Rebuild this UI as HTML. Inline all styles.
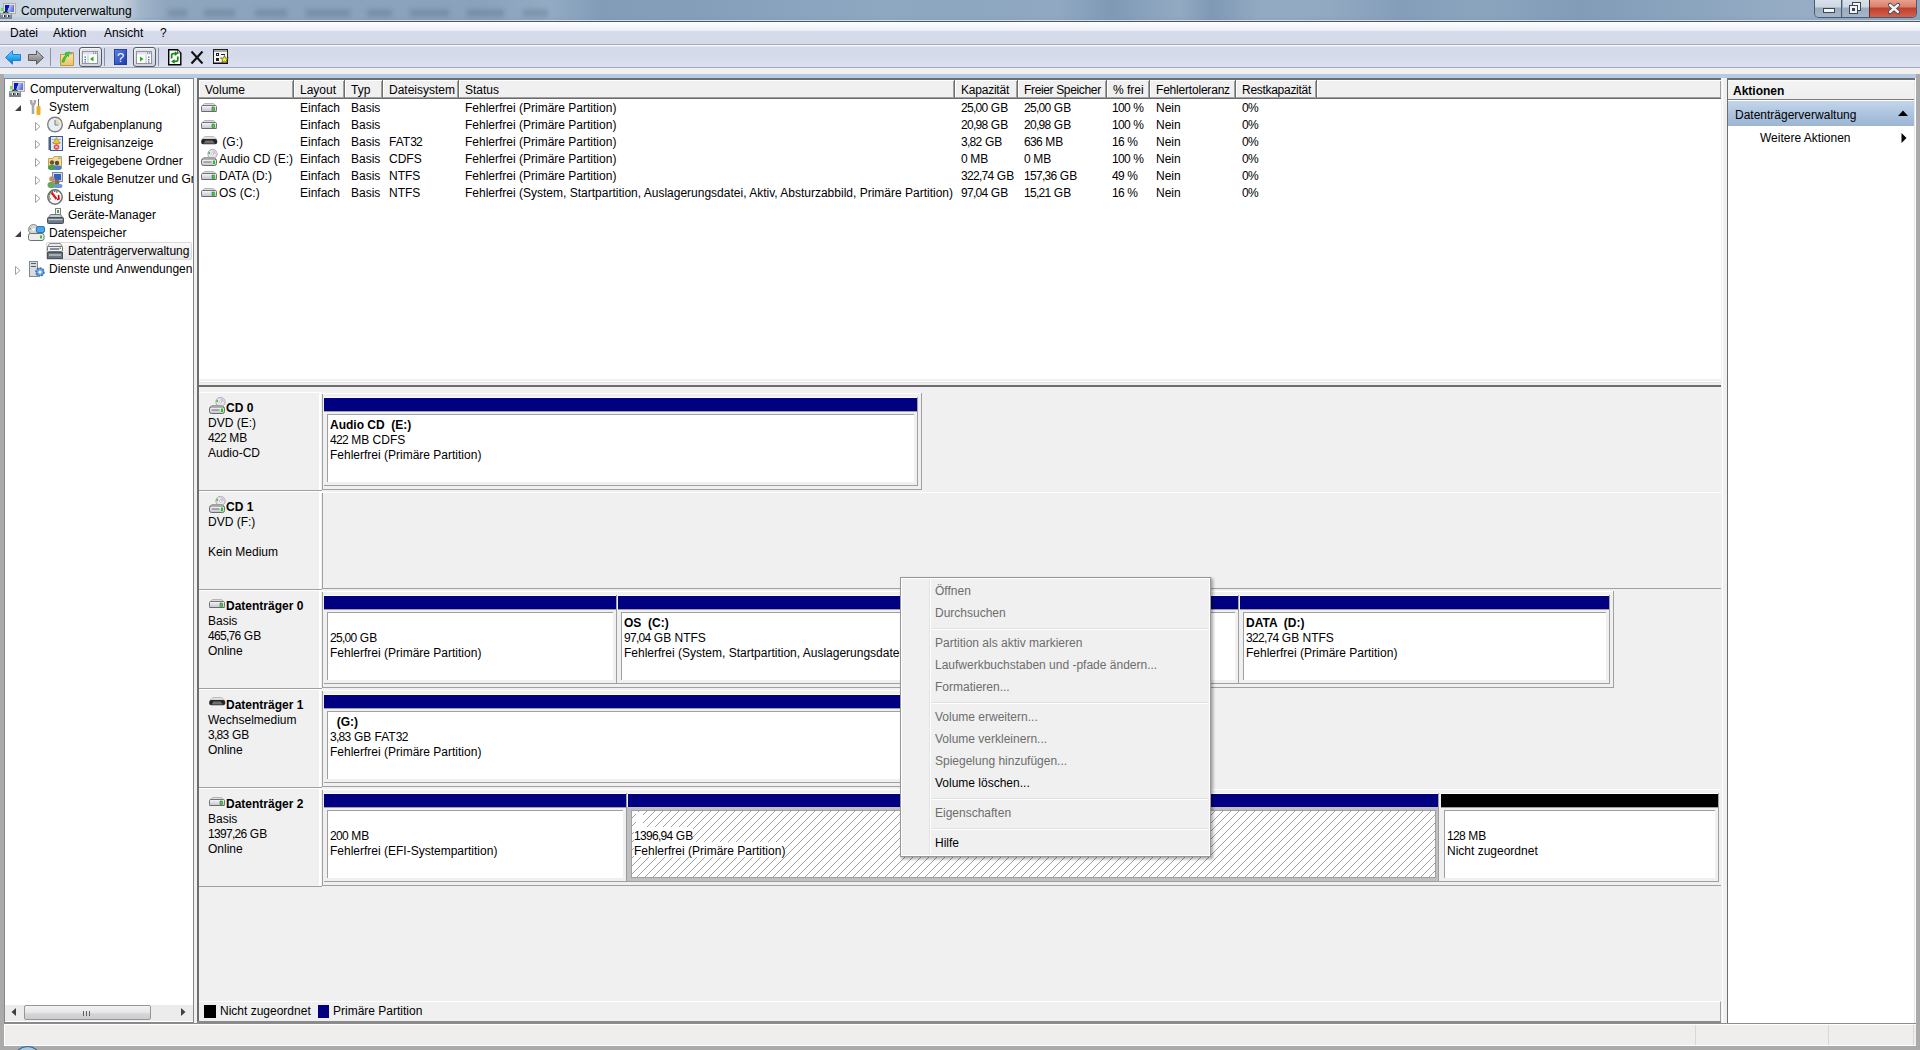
<!DOCTYPE html><html><head><meta charset="utf-8"><title>Computerverwaltung</title><style>
*{margin:0;padding:0;box-sizing:border-box}
html,body{width:1920px;height:1050px;overflow:hidden;background:#aaaaaa;font-family:"Liberation Sans",sans-serif;font-size:12px;color:#000}
.t{position:absolute;white-space:pre;line-height:14px}
.b{font-weight:bold}
.n{letter-spacing:-0.7px}
.g{color:#6d6d6d}
svg{position:absolute;overflow:visible}
</style></head><body>
<div style="position:absolute;left:0px;top:0px;width:1920px;height:21px;background:linear-gradient(90deg,#c6d3e0 0px,#d2dce6 60px,#c8d4df 120px,#a2b6ca 140px,#8fa6bf 165px,#8ba3bd 300px,#8aa2bc 480px,#93abc4 550px,#829cb8 600px,#859fba 700px,#8aa3be 800px,#8fa8c2 880px,#8ea7c1 960px,#90a8c2 1060px,#7f99b5 1112px,#93aac3 1180px,#7f98b4 1212px,#93aac3 1260px,#92a9c2 1330px,#849db9 1400px,#8ba4be 1480px,#829cb8 1580px,#8ca5bf 1700px,#97adc5 1800px,#8fa6bf 1920px)"></div>
<div style="position:absolute;left:0px;top:17px;width:1920px;height:3px;background:rgba(120,150,180,0.12)"></div>
<div style="position:absolute;left:0px;top:20px;width:1920px;height:1px;background:#d0dbe6"></div>
<div style="position:absolute;left:168px;top:9px;width:19px;height:8px;background:rgba(60,80,100,0.22);filter:blur(2px)"></div>
<div style="position:absolute;left:204px;top:9px;width:31px;height:8px;background:rgba(60,80,100,0.22);filter:blur(2px)"></div>
<div style="position:absolute;left:255px;top:9px;width:32px;height:8px;background:rgba(60,80,100,0.22);filter:blur(2px)"></div>
<div style="position:absolute;left:306px;top:9px;width:44px;height:8px;background:rgba(60,80,100,0.22);filter:blur(2px)"></div>
<div style="position:absolute;left:367px;top:9px;width:25px;height:8px;background:rgba(60,80,100,0.22);filter:blur(2px)"></div>
<div style="position:absolute;left:410px;top:9px;width:39px;height:8px;background:rgba(60,80,100,0.22);filter:blur(2px)"></div>
<div style="position:absolute;left:467px;top:9px;width:37px;height:8px;background:rgba(60,80,100,0.22);filter:blur(2px)"></div>
<div style="position:absolute;left:523px;top:9px;width:25px;height:8px;background:rgba(60,80,100,0.22);filter:blur(2px)"></div>
<div style="position:absolute;left:0px;top:21px;width:1920px;height:1px;background:#4a5868"></div>
<div class="t " style="left:21px;top:4px;">Computerverwaltung</div>
<svg style="left:0px;top:0px" width="17" height="20"><defs><linearGradient id="cs" x1="0" y1="0" x2="1" y2="0.3"><stop offset="0" stop-color="#0008d8"/><stop offset="0.45" stop-color="#1020c0"/><stop offset="0.5" stop-color="#b8c8ff"/><stop offset="1" stop-color="#5a70f0"/></linearGradient></defs><rect x="3.5" y="3.5" width="12" height="10" fill="#e8e4cc" stroke="#b4b0a0"/><rect x="5" y="5" width="9" height="7" fill="url(#cs)"/><rect x="1" y="8" width="2" height="3" fill="#50ee40"/><rect x="1" y="11" width="2" height="2" fill="#e0d8e8"/><path d="M3.5 12.8 Q5.5 11 8.5 12.5" stroke="#202020" stroke-width="1.2" fill="none"/><rect x="0" y="13" width="12" height="6" fill="#788890"/><rect x="0.5" y="13.5" width="11" height="1.5" fill="#b8c4c8"/><rect x="3" y="15" width="1" height="2" fill="#fff"/><rect x="7" y="15" width="1" height="2" fill="#fff"/><rect x="4" y="15" width="1" height="2" fill="#202020"/><rect x="8" y="15" width="1" height="2" fill="#202020"/></svg>
<div style="position:absolute;left:1814px;top:0;width:103px;height:18px;border:1px solid #4b5a6c;border-top:none;border-radius:0 0 5px 5px;overflow:hidden">
<div style="position:absolute;left:0;top:0;width:27px;height:17px;background:linear-gradient(#d9e1ea 0,#cdd7e2 7px,#9aabbd 8px,#a6b6c8 17px);border-right:1px solid #4b5a6c"></div>
<div style="position:absolute;left:28px;top:0;width:26px;height:17px;background:linear-gradient(#d9e1ea 0,#cdd7e2 7px,#9aabbd 8px,#a6b6c8 17px)"></div>
<div style="position:absolute;left:54px;top:0;width:49px;height:17px;background:linear-gradient(#e8a08e 0,#d9806a 7px,#c0402a 8px,#d06050 17px);border-left:1px solid #6a2a20"></div>
</div>
<svg style="left:1823px;top:8px" width="12" height="6"><rect x="0.5" y="0.5" width="11" height="4" fill="#f4f4f4" stroke="#3a4656"/></svg>
<svg style="left:1849px;top:2px" width="12" height="12"><rect x="3.5" y="0.5" width="8" height="8" fill="#f4f4f4" stroke="#3a4656"/><rect x="0.5" y="3.5" width="8" height="8" fill="#f4f4f4" stroke="#3a4656"/><rect x="3" y="6" width="3" height="3" fill="#3a4656"/></svg>
<svg style="left:1888px;top:3px" width="12" height="11"><path d="M2 2 L10 9 M10 2 L2 9" stroke="#3a4656" stroke-width="4.2" stroke-linecap="round"/><path d="M2 2 L10 9 M10 2 L2 9" stroke="#f4f4f4" stroke-width="2.4" stroke-linecap="round"/></svg>
<div style="position:absolute;left:0px;top:22px;width:1920px;height:22px;background:linear-gradient(#ffffff 0,#f6f7fb 4px,#eceff8 9px,#d6dbec 9px,#d5daeb 22px)"></div>
<div style="position:absolute;left:0px;top:44px;width:1920px;height:1px;background:#a9abb3"></div>
<div class="t " style="left:10px;top:26px;">Datei</div>
<div class="t " style="left:53px;top:26px;">Aktion</div>
<div class="t " style="left:104px;top:26px;">Ansicht</div>
<div class="t " style="left:160px;top:26px;">?</div>
<div style="position:absolute;left:0px;top:45px;width:1920px;height:22px;background:linear-gradient(#f4f6fc 0,#f4f6fc 1px,#d5daeb 2px,#d6dbec 12px,#dde2f2 22px)"></div>
<div style="position:absolute;left:0px;top:67px;width:1920px;height:1px;background:#a2a8b8"></div>
<div style="position:absolute;left:0px;top:68px;width:1920px;height:6px;background:#f0f0f0"></div>
<div style="position:absolute;left:4px;top:74px;width:1912px;height:4px;background:#b4cbe3"></div>
<div style="position:absolute;left:0px;top:74px;width:4px;height:976px;background:#aaaaaa"></div>
<div style="position:absolute;left:1916px;top:74px;width:4px;height:976px;background:#aaaaaa"></div>
<svg style="left:4px;top:50px" width="18" height="16"><defs><linearGradient id="ab" x1="0" y1="0" x2="0" y2="1"><stop offset="0" stop-color="#7fd4ff"/><stop offset="0.45" stop-color="#2eb0f4"/><stop offset="1" stop-color="#0a6fc8"/></linearGradient><linearGradient id="ag" x1="0" y1="0" x2="0" y2="1"><stop offset="0" stop-color="#d8d8d8"/><stop offset="0.5" stop-color="#9c9c9c"/><stop offset="1" stop-color="#7a7a7a"/></linearGradient></defs><path d="M1.5 7.5 L8.5 0.8 L8.5 4.5 L16.5 4.5 L16.5 10.5 L8.5 10.5 L8.5 14.2 Z" fill="url(#ab)" stroke="#2a7ed0" stroke-width="1" stroke-linejoin="miter"/></svg>
<svg style="left:27px;top:50px" width="18" height="16"><path d="M16.5 7.5 L9.5 0.8 L9.5 4.5 L1.5 4.5 L1.5 10.5 L9.5 10.5 L9.5 14.2 Z" fill="url(#ag)" stroke="#5a5a5a" stroke-width="1"/></svg>
<div style="position:absolute;left:50px;top:48px;width:1px;height:18px;background:#8a93a6"></div>
<svg style="left:59px;top:50px" width="16" height="16"><defs><linearGradient id="fy" x1="0" y1="0" x2="0" y2="1"><stop offset="0" stop-color="#fbe7a8"/><stop offset="1" stop-color="#e9c46a"/></linearGradient></defs><path d="M1.5 4.5 L9 4.5 L10 2.5 L14.5 2.5 L14.5 15.5 L1.5 15.5 Z" fill="url(#fy)" stroke="#c49a3c"/><path d="M3 12 Q4 7 7 5 L6 3 L10.5 2 L9.5 6.5 L8.5 5.5 Q6 8 5 12 Z" fill="#3cd43c" stroke="#22a022" stroke-width="0.7"/><rect x="11" y="3" width="2.5" height="1.5" fill="#6aa8e8"/></svg>
<div style="position:absolute;left:79px;top:47px;width:23px;height:20px;border:1px solid #555a63;border-radius:3px;background:linear-gradient(#e4e7f0,#cdd2de);box-shadow:inset 1px 1px 0 rgba(255,255,255,0.5)"></div>
<svg style="left:82px;top:51px" width="16" height="13"><rect x="0.5" y="0.5" width="15" height="12" fill="#fdfdfd" stroke="#8f959c"/><rect x="1" y="1" width="14" height="2.5" fill="#dfe3e8"/><rect x="11" y="1.5" width="1.2" height="1.2" fill="#707880"/><rect x="13" y="1.5" width="1.2" height="1.2" fill="#707880"/><rect x="5.5" y="4" width="1" height="8" fill="#b8bec6"/><rect x="2.5" y="5.5" width="1.5" height="1.3" fill="#3a6ad0"/><rect x="2.5" y="8" width="1.5" height="1.3" fill="#3a6ad0"/><rect x="2.5" y="10.3" width="1.5" height="1.3" fill="#3a6ad0"/><path d="M11.5 5.5 L8 8 L11.5 10.5 Z" fill="#22b022"/></svg>
<div style="position:absolute;left:104px;top:48px;width:1px;height:18px;background:#8a93a6"></div>
<svg style="left:114px;top:49px" width="14" height="16"><defs><linearGradient id="hq" x1="0" y1="0" x2="1" y2="1"><stop offset="0" stop-color="#5a84e8"/><stop offset="1" stop-color="#1c3aa8"/></linearGradient></defs><rect x="0.5" y="0.5" width="12" height="15" fill="url(#hq)" stroke="#2a3e98"/><text x="3" y="12.5" font-family="Liberation Sans" font-size="13" fill="#fff">?</text></svg>
<div style="position:absolute;left:133px;top:47px;width:23px;height:20px;border:1px solid #555a63;border-radius:3px;background:linear-gradient(#e4e7f0,#cdd2de);box-shadow:inset 1px 1px 0 rgba(255,255,255,0.5)"></div>
<svg style="left:136px;top:51px" width="16" height="13"><rect x="0.5" y="0.5" width="15" height="12" fill="#fdfdfd" stroke="#8f959c"/><rect x="1" y="1" width="14" height="2.5" fill="#dfe3e8"/><rect x="11" y="1.5" width="1.2" height="1.2" fill="#707880"/><rect x="13" y="1.5" width="1.2" height="1.2" fill="#707880"/><rect x="9.5" y="4" width="1" height="8" fill="#b8bec6"/><rect x="12" y="5.5" width="1.5" height="1.3" fill="#3a6ad0"/><rect x="12" y="8" width="1.5" height="1.3" fill="#3a6ad0"/><rect x="12" y="10.3" width="1.5" height="1.3" fill="#3a6ad0"/><path d="M4 5.5 L7.5 8 L4 10.5 Z" fill="#22b022"/></svg>
<div style="position:absolute;left:158px;top:48px;width:1px;height:18px;background:#8a93a6"></div>
<svg style="left:168px;top:49px" width="14" height="17"><path d="M0.7 0.7 L9.5 0.7 L12.8 4 L12.8 15.8 L0.7 15.8 Z" fill="#fff" stroke="#000" stroke-width="1.4"/><path d="M9.5 1 L9.5 4 L12.5 4" fill="#e8e8e8" stroke="#000" stroke-width="0.6"/><path d="M3.6 9.5 L3.6 6.2 Q3.6 4.6 5.2 4.6 L7.2 4.6" stroke="#138a13" stroke-width="1.7" fill="none"/><path d="M6.8 2.2 L10.2 4.6 L6.8 7 Z" fill="#138a13"/><path d="M9.8 7.5 L9.8 10.8 Q9.8 12.4 8.2 12.4 L6.2 12.4" stroke="#138a13" stroke-width="1.7" fill="none"/><path d="M6.6 10 L3.2 12.4 L6.6 14.8 Z" fill="#138a13"/></svg>
<svg style="left:190px;top:50px" width="14" height="15"><path d="M1.5 1.5 L12.5 13.5" stroke="#111" stroke-width="2"/><path d="M12.5 1.5 L1.5 13.5" stroke="#111" stroke-width="2.2"/></svg>
<svg style="left:213px;top:49px" width="17" height="17"><rect x="0.5" y="0.5" width="14" height="14" fill="#f4f4f4" stroke="#202020"/><rect x="1" y="1" width="13" height="2" fill="#a8a8a8"/><rect x="0" y="13.5" width="15" height="1.5" fill="#101010"/><rect x="3" y="4" width="3" height="3" fill="#202020"/><rect x="4" y="5" width="1" height="1" fill="#fff"/><rect x="3" y="9" width="3" height="3" fill="#202020"/><rect x="8" y="5" width="4" height="1" fill="#202020"/><path d="M11.5 6.5 L12.6 9.2 L15.5 9 L13.3 10.9 L14.3 13.7 L11.5 12.2 L8.7 13.7 L9.7 10.9 L7.5 9 L10.4 9.2 Z" fill="#f8f020" stroke="#303000" stroke-width="0.6"/></svg>
<div style="position:absolute;left:4px;top:78px;width:190px;height:945px;background:#fff;border:1px solid #828790"></div>
<div style="position:absolute;left:46px;top:242px;width:146px;height:18px;border:1px solid #d9d9d9;border-radius:2px;background:linear-gradient(#fafafa,#e6e6e6)"></div>
<div style="position:absolute;left:5px;top:79px;width:188px;height:200px;overflow:hidden">
<div class="t" style="left:25px;top:3px">Computerverwaltung (Lokal)</div>
<svg style="left:4px;top:-1px" width="17" height="20"><defs><linearGradient id="cs2" x1="0" y1="0" x2="1" y2="0.3"><stop offset="0" stop-color="#0008d8"/><stop offset="0.45" stop-color="#1020c0"/><stop offset="0.5" stop-color="#b8c8ff"/><stop offset="1" stop-color="#5a70f0"/></linearGradient></defs><rect x="3.5" y="3.5" width="12" height="10" fill="#e8e4cc" stroke="#b4b0a0"/><rect x="5" y="5" width="9" height="7" fill="url(#cs2)"/><rect x="1" y="8" width="2" height="3" fill="#50ee40"/><rect x="1" y="11" width="2" height="2" fill="#e0d8e8"/><path d="M3.5 12.8 Q5.5 11 8.5 12.5" stroke="#202020" stroke-width="1.2" fill="none"/><rect x="0" y="13" width="12" height="6" fill="#788890"/><rect x="0.5" y="13.5" width="11" height="1.5" fill="#b8c4c8"/><rect x="3" y="15" width="1" height="2" fill="#fff"/><rect x="7" y="15" width="1" height="2" fill="#fff"/><rect x="4" y="15" width="1" height="2" fill="#202020"/><rect x="8" y="15" width="1" height="2" fill="#202020"/></svg>
<div class="t" style="left:44px;top:21px">System</div>
<svg style="left:10px;top:26px" width="7" height="7"><path d="M6 0 L6 6 L0 6 Z" fill="#404040"/></svg>
<svg style="left:25px;top:20px" width="12" height="16"><path d="M3 15 L3 6 M1 1 Q1 5 3 6 Q5 5 5 1" stroke="#a8a8a8" stroke-width="2.5" fill="none"/><rect x="8" y="0" width="1" height="7" fill="#707070"/><rect x="6.5" y="7" width="4" height="9" rx="1" fill="#e8b020"/></svg>
<div class="t" style="left:63px;top:39px">Aufgabenplanung</div>
<svg style="left:30px;top:43px" width="6" height="9"><path d="M0.5 0.5 L5 4.5 L0.5 8.5 Z" fill="none" stroke="#a0a0a0"/></svg>
<svg style="left:42px;top:37px" width="17" height="17"><circle cx="8" cy="8.5" r="7.3" fill="#e8eef6" stroke="#808080" stroke-width="1.4"/><path d="M8 8.5 L8 3.5 A5 5 0 0 1 13 8.5 Z" fill="#f0d8a0"/><path d="M8 4 L8 9 L11.5 9" stroke="#6080a0" stroke-width="1" fill="none"/></svg>
<div class="t" style="left:63px;top:57px">Ereignisanzeige</div>
<svg style="left:30px;top:61px" width="6" height="9"><path d="M0.5 0.5 L5 4.5 L0.5 8.5 Z" fill="none" stroke="#a0a0a0"/></svg>
<svg style="left:43px;top:57px" width="16" height="16"><rect x="2.5" y="0.5" width="12" height="14" fill="#dfe8f6" stroke="#3a5aa0"/><rect x="4" y="3" width="9" height="1" fill="#9ab0d8"/><rect x="4" y="6" width="9" height="1" fill="#9ab0d8"/><rect x="0.5" y="1" width="2" height="13" fill="#50607a"/><path d="M8.5 1.5 L12 7.5 L5 7.5 Z" fill="#f4c820" stroke="#a08010" stroke-width="0.6"/><circle cx="8.5" cy="11" r="2.8" fill="#e84848"/><path d="M7.3 9.8 L9.7 12.2 M9.7 9.8 L7.3 12.2" stroke="#fff" stroke-width="0.8"/></svg>
<div class="t" style="left:63px;top:75px">Freigegebene Ordner</div>
<svg style="left:30px;top:79px" width="6" height="9"><path d="M0.5 0.5 L5 4.5 L0.5 8.5 Z" fill="none" stroke="#a0a0a0"/></svg>
<svg style="left:42px;top:76px" width="16" height="15"><path d="M1.5 3.5 L6 3.5 L7 1.5 L14.5 1.5 L14.5 13.5 L1.5 13.5 Z" fill="#f6dc96" stroke="#c8a050"/><rect x="11" y="2.5" width="2.5" height="1.5" fill="#7ab0e8"/><circle cx="5" cy="7.5" r="2.2" fill="#6a5040"/><rect x="1" y="10" width="8" height="5" rx="2.5" fill="#4aa04a"/><circle cx="10" cy="8" r="2.2" fill="#5a4a3a"/><rect x="6.5" y="10.5" width="8" height="4.5" rx="2.2" fill="#4a80c8"/></svg>
<div class="t" style="left:63px;top:93px">Lokale Benutzer und Gruppen</div>
<svg style="left:30px;top:97px" width="6" height="9"><path d="M0.5 0.5 L5 4.5 L0.5 8.5 Z" fill="none" stroke="#a0a0a0"/></svg>
<svg style="left:42px;top:93px" width="16" height="16"><rect x="5.5" y="0.5" width="10" height="9" fill="#d8dce0" stroke="#808890"/><rect x="7" y="2" width="7" height="6" fill="#3060d0"/><circle cx="5" cy="7" r="2.8" fill="#c09068"/><rect x="0.5" y="10" width="8" height="6" rx="3" fill="#68a858"/><circle cx="10" cy="10" r="2.5" fill="#8a6a50"/><rect x="6.5" y="12" width="9" height="4" rx="2" fill="#6a9ad0"/></svg>
<div class="t" style="left:63px;top:111px">Leistung</div>
<svg style="left:30px;top:115px" width="6" height="9"><path d="M0.5 0.5 L5 4.5 L0.5 8.5 Z" fill="none" stroke="#a0a0a0"/></svg>
<svg style="left:42px;top:110px" width="17" height="17"><circle cx="8" cy="8" r="7.2" fill="#fafafa" stroke="#6e6e6e" stroke-width="1.5"/><path d="M3.5 10.5 A4.8 4.8 0 0 1 11 3.8" stroke="#507a60" stroke-width="1.6" fill="none" stroke-dasharray="1.4 0.8"/><path d="M4.5 3.5 L9.5 10" stroke="#ee1010" stroke-width="2.2"/><path d="M11.5 6 L12 10 L10 10.5" stroke="#d00000" stroke-width="1.6" fill="none"/></svg>
<div class="t" style="left:63px;top:129px">Geräte-Manager</div>
<svg style="left:42px;top:129px" width="17" height="16"><rect x="8.5" y="0.5" width="5" height="7" fill="#f4f4f4" stroke="#808080"/><rect x="10" y="2" width="2" height="3" fill="#40b040"/><path d="M3.5 6.5 L13.5 6.5 L15.5 9.5 L1.5 9.5 Z" fill="#c8ccd0" stroke="#70787e"/><rect x="0.5" y="9.5" width="16" height="6" rx="1" fill="#6c7884" stroke="#48525c"/><rect x="1.5" y="11" width="14" height="1.2" fill="#c0c8d0"/></svg>
<div class="t" style="left:44px;top:147px">Datenspeicher</div>
<svg style="left:10px;top:152px" width="7" height="7"><path d="M6 0 L6 6 L0 6 Z" fill="#404040"/></svg>
<svg style="left:23px;top:145px" width="17" height="17"><circle cx="5.5" cy="5.5" r="5" fill="#d6d6d6" stroke="#8a8a8a"/><circle cx="5.5" cy="5.5" r="1.2" fill="#fff"/><rect x="1.5" y="4" width="1.5" height="1.5" fill="#40c040"/><rect x="8.5" y="2.5" width="8" height="6" rx="1.5" fill="#4aa8e8" stroke="#2a78b8"/><rect x="0.5" y="9.5" width="15.5" height="7" rx="2" fill="#ececec" stroke="#707070"/><rect x="12" y="11.5" width="2" height="3" fill="#30c030"/></svg>
<div class="t" style="left:63px;top:165px">Datenträgerverwaltung</div>
<svg style="left:42px;top:164px" width="16" height="16"><path d="M2.5 0.5 L13.5 0.5 L15.5 4 L0.5 4 Z" fill="#e8e8e8" stroke="#909090"/><rect x="0.5" y="3.5" width="15" height="5" rx="1" fill="#f0f0f0" stroke="#707070"/><rect x="3" y="5.5" width="9" height="1" fill="#202a60"/><rect x="12.5" y="4.5" width="1.5" height="1.5" fill="#30c030"/><rect x="0.5" y="9.5" width="15" height="6" fill="#6c7680" stroke="#4a525a"/><rect x="2" y="11.5" width="12" height="1" fill="#e0e4e8"/></svg>
<div class="t" style="left:44px;top:183px">Dienste und Anwendungen</div>
<svg style="left:10px;top:187px" width="6" height="9"><path d="M0.5 0.5 L5 4.5 L0.5 8.5 Z" fill="none" stroke="#a0a0a0"/></svg>
<svg style="left:24px;top:182px" width="16" height="16"><rect x="0.5" y="0.5" width="8" height="15" fill="#d8dce0" stroke="#808890"/><rect x="2" y="2" width="5" height="1" fill="#506070"/><rect x="2" y="5" width="5" height="1" fill="#506070"/><circle cx="11" cy="11" r="4" fill="#6aa0e0" stroke="#3a70b0" stroke-width="1.5" stroke-dasharray="2 1"/><circle cx="11" cy="11" r="1.5" fill="#fff"/></svg>
</div>
<div style="position:absolute;left:5px;top:1005px;width:188px;height:16px;background:#ececec"></div>
<svg style="left:11px;top:1008px" width="6" height="9"><path d="M5 0 L5 8 L0.5 4 Z" fill="#404040"/></svg>
<svg style="left:181px;top:1008px" width="6" height="9"><path d="M0 0 L0 8 L4.5 4 Z" fill="#404040"/></svg>
<div style="position:absolute;left:24px;top:1005px;width:127px;height:15px;border:1px solid #979797;border-radius:2px;background:linear-gradient(#f3f3f3 0,#e8e8e8 6px,#d5d5d8 8px,#c9c9cc 15px)"></div>
<div style="position:absolute;left:83px;top:1011px;width:1px;height:5px;background:#606060"></div>
<div style="position:absolute;left:86px;top:1011px;width:1px;height:5px;background:#606060"></div>
<div style="position:absolute;left:89px;top:1011px;width:1px;height:5px;background:#606060"></div>
<div style="position:absolute;left:194px;top:78px;width:3px;height:945px;background:#f0f0f0"></div>
<div style="position:absolute;left:197px;top:78px;width:1525px;height:309px;background:#fff;border-top:2px solid #6e6e6e;border-left:2px solid #6e6e6e;border-bottom:2px solid #6e6e6e"></div>
<div style="position:absolute;left:199px;top:80px;width:1522px;height:18px;background:#f0f0f0"></div>
<div style="position:absolute;left:199px;top:98px;width:1522px;height:1px;background:#6a6a6a"></div>
<div style="position:absolute;left:199px;top:80px;width:94px;height:1px;background:#ffffff"></div>
<div style="position:absolute;left:199px;top:80px;width:1px;height:18px;background:#ffffff"></div>
<div style="position:absolute;left:292px;top:81px;width:1px;height:17px;background:#a0a0a0"></div>
<div style="position:absolute;left:199px;top:97px;width:94px;height:1px;background:#a0a0a0"></div>
<div class="t " style="left:205px;top:83px;letter-spacing:0px">Volume</div>
<div style="position:absolute;left:294px;top:80px;width:50px;height:1px;background:#ffffff"></div>
<div style="position:absolute;left:294px;top:80px;width:1px;height:18px;background:#ffffff"></div>
<div style="position:absolute;left:343px;top:81px;width:1px;height:17px;background:#a0a0a0"></div>
<div style="position:absolute;left:294px;top:97px;width:50px;height:1px;background:#a0a0a0"></div>
<div class="t " style="left:300px;top:83px;letter-spacing:0px">Layout</div>
<div style="position:absolute;left:345px;top:80px;width:37px;height:1px;background:#ffffff"></div>
<div style="position:absolute;left:345px;top:80px;width:1px;height:18px;background:#ffffff"></div>
<div style="position:absolute;left:381px;top:81px;width:1px;height:17px;background:#a0a0a0"></div>
<div style="position:absolute;left:345px;top:97px;width:37px;height:1px;background:#a0a0a0"></div>
<div class="t " style="left:351px;top:83px;letter-spacing:0px">Typ</div>
<div style="position:absolute;left:383px;top:80px;width:75px;height:1px;background:#ffffff"></div>
<div style="position:absolute;left:383px;top:80px;width:1px;height:18px;background:#ffffff"></div>
<div style="position:absolute;left:457px;top:81px;width:1px;height:17px;background:#a0a0a0"></div>
<div style="position:absolute;left:383px;top:97px;width:75px;height:1px;background:#a0a0a0"></div>
<div class="t " style="left:389px;top:83px;letter-spacing:0px">Dateisystem</div>
<div style="position:absolute;left:459px;top:80px;width:495px;height:1px;background:#ffffff"></div>
<div style="position:absolute;left:459px;top:80px;width:1px;height:18px;background:#ffffff"></div>
<div style="position:absolute;left:953px;top:81px;width:1px;height:17px;background:#a0a0a0"></div>
<div style="position:absolute;left:459px;top:97px;width:495px;height:1px;background:#a0a0a0"></div>
<div class="t " style="left:465px;top:83px;letter-spacing:0px">Status</div>
<div style="position:absolute;left:955px;top:80px;width:62px;height:1px;background:#ffffff"></div>
<div style="position:absolute;left:955px;top:80px;width:1px;height:18px;background:#ffffff"></div>
<div style="position:absolute;left:1016px;top:81px;width:1px;height:17px;background:#a0a0a0"></div>
<div style="position:absolute;left:955px;top:97px;width:62px;height:1px;background:#a0a0a0"></div>
<div class="t " style="left:961px;top:83px;letter-spacing:-0.22px">Kapazität</div>
<div style="position:absolute;left:1018px;top:80px;width:88px;height:1px;background:#ffffff"></div>
<div style="position:absolute;left:1018px;top:80px;width:1px;height:18px;background:#ffffff"></div>
<div style="position:absolute;left:1105px;top:81px;width:1px;height:17px;background:#a0a0a0"></div>
<div style="position:absolute;left:1018px;top:97px;width:88px;height:1px;background:#a0a0a0"></div>
<div class="t " style="left:1024px;top:83px;letter-spacing:-0.35px">Freier Speicher</div>
<div style="position:absolute;left:1107px;top:80px;width:42px;height:1px;background:#ffffff"></div>
<div style="position:absolute;left:1107px;top:80px;width:1px;height:18px;background:#ffffff"></div>
<div style="position:absolute;left:1148px;top:81px;width:1px;height:17px;background:#a0a0a0"></div>
<div style="position:absolute;left:1107px;top:97px;width:42px;height:1px;background:#a0a0a0"></div>
<div class="t " style="left:1113px;top:83px;letter-spacing:0px">% frei</div>
<div style="position:absolute;left:1150px;top:80px;width:85px;height:1px;background:#ffffff"></div>
<div style="position:absolute;left:1150px;top:80px;width:1px;height:18px;background:#ffffff"></div>
<div style="position:absolute;left:1234px;top:81px;width:1px;height:17px;background:#a0a0a0"></div>
<div style="position:absolute;left:1150px;top:97px;width:85px;height:1px;background:#a0a0a0"></div>
<div class="t " style="left:1156px;top:83px;letter-spacing:-0.2px">Fehlertoleranz</div>
<div style="position:absolute;left:1236px;top:80px;width:80px;height:1px;background:#ffffff"></div>
<div style="position:absolute;left:1236px;top:80px;width:1px;height:18px;background:#ffffff"></div>
<div style="position:absolute;left:1315px;top:81px;width:1px;height:17px;background:#a0a0a0"></div>
<div style="position:absolute;left:1236px;top:97px;width:80px;height:1px;background:#a0a0a0"></div>
<div class="t " style="left:1242px;top:83px;letter-spacing:-0.29px">Restkapazität</div>
<div style="position:absolute;left:1317px;top:80px;width:404px;height:1px;background:#ffffff"></div>
<div style="position:absolute;left:1317px;top:80px;width:1px;height:18px;background:#ffffff"></div>
<div style="position:absolute;left:1720px;top:81px;width:1px;height:17px;background:#a0a0a0"></div>
<div style="position:absolute;left:1317px;top:97px;width:404px;height:1px;background:#a0a0a0"></div>
<div style="position:absolute;left:293px;top:80px;width:1px;height:19px;background:#6e6e6e"></div>
<div style="position:absolute;left:344px;top:80px;width:1px;height:19px;background:#6e6e6e"></div>
<div style="position:absolute;left:382px;top:80px;width:1px;height:19px;background:#6e6e6e"></div>
<div style="position:absolute;left:458px;top:80px;width:1px;height:19px;background:#6e6e6e"></div>
<div style="position:absolute;left:954px;top:80px;width:1px;height:19px;background:#6e6e6e"></div>
<div style="position:absolute;left:1017px;top:80px;width:1px;height:19px;background:#6e6e6e"></div>
<div style="position:absolute;left:1106px;top:80px;width:1px;height:19px;background:#6e6e6e"></div>
<div style="position:absolute;left:1149px;top:80px;width:1px;height:19px;background:#6e6e6e"></div>
<div style="position:absolute;left:1235px;top:80px;width:1px;height:19px;background:#6e6e6e"></div>
<div style="position:absolute;left:1316px;top:80px;width:1px;height:19px;background:#6e6e6e"></div>
<svg style="left:201px;top:103px" width="17" height="10"><defs><linearGradient id="hg" x1="0" y1="0" x2="0" y2="1"><stop offset="0" stop-color="#fbfbfd"/><stop offset="0.35" stop-color="#e4e4ec"/><stop offset="1" stop-color="#c4c4cc"/></linearGradient></defs><path d="M3.5 0.5 L12.5 0.5 L15 2.8 L1 2.8 Z" fill="#dcdcdc" stroke="#b0b0b0" stroke-width="0.9"/><rect x="0.5" y="2.5" width="15" height="6" rx="1.2" fill="url(#hg)" stroke="#737378"/><rect x="0.5" y="8" width="15" height="1" fill="#6a6a70"/><rect x="11" y="4" width="2.5" height="3.5" fill="#28e028" stroke="#3a5a3a" stroke-width="0.5"/></svg>
<div class="t " style="left:300px;top:101px;">Einfach</div>
<div class="t " style="left:351px;top:101px;">Basis</div>
<div class="t " style="left:465px;top:101px;">Fehlerfrei (Primäre Partition)</div>
<div class="t " style="left:961px;top:101px;"><span class="n">25,00</span> GB</div>
<div class="t " style="left:1024px;top:101px;"><span class="n">25,00</span> GB</div>
<div class="t " style="left:1112px;top:101px;"><span class="n">100</span> %</div>
<div class="t " style="left:1156px;top:101px;">Nein</div>
<div class="t " style="left:1242px;top:101px;"><span class="n">0</span>%</div>
<svg style="left:201px;top:120px" width="17" height="10"><defs><linearGradient id="hg" x1="0" y1="0" x2="0" y2="1"><stop offset="0" stop-color="#fbfbfd"/><stop offset="0.35" stop-color="#e4e4ec"/><stop offset="1" stop-color="#c4c4cc"/></linearGradient></defs><path d="M3.5 0.5 L12.5 0.5 L15 2.8 L1 2.8 Z" fill="#dcdcdc" stroke="#b0b0b0" stroke-width="0.9"/><rect x="0.5" y="2.5" width="15" height="6" rx="1.2" fill="url(#hg)" stroke="#737378"/><rect x="0.5" y="8" width="15" height="1" fill="#6a6a70"/><rect x="11" y="4" width="2.5" height="3.5" fill="#28e028" stroke="#3a5a3a" stroke-width="0.5"/></svg>
<div class="t " style="left:300px;top:118px;">Einfach</div>
<div class="t " style="left:351px;top:118px;">Basis</div>
<div class="t " style="left:465px;top:118px;">Fehlerfrei (Primäre Partition)</div>
<div class="t " style="left:961px;top:118px;"><span class="n">20,98</span> GB</div>
<div class="t " style="left:1024px;top:118px;"><span class="n">20,98</span> GB</div>
<div class="t " style="left:1112px;top:118px;"><span class="n">100</span> %</div>
<div class="t " style="left:1156px;top:118px;">Nein</div>
<div class="t " style="left:1242px;top:118px;"><span class="n">0</span>%</div>
<svg style="left:201px;top:136px" width="17" height="9"><path d="M4 0.5 L12.5 0.5 L15.5 3.2 L1 3.2 Z" fill="#e2e2e2" stroke="#b0b0b0" stroke-width="0.8"/><rect x="0.2" y="3" width="16" height="5.2" rx="2" fill="#262626"/><path d="M4.5 4.6 L11.5 4.6 L14 7.6 L2.5 7.6 Z" fill="#707070"/></svg>
<div class="t " style="left:219px;top:135px;"> (G:)</div>
<div class="t " style="left:300px;top:135px;">Einfach</div>
<div class="t " style="left:351px;top:135px;">Basis</div>
<div class="t " style="left:389px;top:135px;">FAT<span class="n">32</span></div>
<div class="t " style="left:465px;top:135px;">Fehlerfrei (Primäre Partition)</div>
<div class="t " style="left:961px;top:135px;"><span class="n">3,82</span> GB</div>
<div class="t " style="left:1024px;top:135px;"><span class="n">636</span> MB</div>
<div class="t " style="left:1112px;top:135px;"><span class="n">16</span> %</div>
<div class="t " style="left:1156px;top:135px;">Nein</div>
<div class="t " style="left:1242px;top:135px;"><span class="n">0</span>%</div>
<svg style="left:201px;top:149px" width="17" height="17"><circle cx="11.5" cy="5" r="4.6" fill="#e8e8ec" stroke="#a8a8a8"/><path d="M11.5 0.5 A4.5 4.5 0 0 1 16 5 L11.5 5 Z" fill="#d8c8e8"/><circle cx="11.5" cy="5" r="1.2" fill="#fff" stroke="#b0b0b0" stroke-width="0.6"/><rect x="7.5" y="3" width="1.5" height="2" fill="#40c040"/><path d="M3 8.5 L13 8.5 L15.5 10.5 L0.5 10.5 Z" fill="#e0e0e0" stroke="#a0a0a0"/><rect x="0.5" y="10" width="15" height="6.5" rx="2" fill="url(#hg)" stroke="#6c6c6c"/><rect x="2.5" y="12.5" width="8" height="1" fill="#707070"/><rect x="12" y="11.5" width="2" height="3.5" fill="#10d010"/></svg>
<div class="t " style="left:219px;top:152px;">Audio CD (E:)</div>
<div class="t " style="left:300px;top:152px;">Einfach</div>
<div class="t " style="left:351px;top:152px;">Basis</div>
<div class="t " style="left:389px;top:152px;">CDFS</div>
<div class="t " style="left:465px;top:152px;">Fehlerfrei (Primäre Partition)</div>
<div class="t " style="left:961px;top:152px;"><span class="n">0</span> MB</div>
<div class="t " style="left:1024px;top:152px;"><span class="n">0</span> MB</div>
<div class="t " style="left:1112px;top:152px;"><span class="n">100</span> %</div>
<div class="t " style="left:1156px;top:152px;">Nein</div>
<div class="t " style="left:1242px;top:152px;"><span class="n">0</span>%</div>
<svg style="left:201px;top:171px" width="17" height="10"><defs><linearGradient id="hg" x1="0" y1="0" x2="0" y2="1"><stop offset="0" stop-color="#fbfbfd"/><stop offset="0.35" stop-color="#e4e4ec"/><stop offset="1" stop-color="#c4c4cc"/></linearGradient></defs><path d="M3.5 0.5 L12.5 0.5 L15 2.8 L1 2.8 Z" fill="#dcdcdc" stroke="#b0b0b0" stroke-width="0.9"/><rect x="0.5" y="2.5" width="15" height="6" rx="1.2" fill="url(#hg)" stroke="#737378"/><rect x="0.5" y="8" width="15" height="1" fill="#6a6a70"/><rect x="11" y="4" width="2.5" height="3.5" fill="#28e028" stroke="#3a5a3a" stroke-width="0.5"/></svg>
<div class="t " style="left:219px;top:169px;">DATA (D:)</div>
<div class="t " style="left:300px;top:169px;">Einfach</div>
<div class="t " style="left:351px;top:169px;">Basis</div>
<div class="t " style="left:389px;top:169px;">NTFS</div>
<div class="t " style="left:465px;top:169px;">Fehlerfrei (Primäre Partition)</div>
<div class="t " style="left:961px;top:169px;"><span class="n">322,74</span> GB</div>
<div class="t " style="left:1024px;top:169px;"><span class="n">157,36</span> GB</div>
<div class="t " style="left:1112px;top:169px;"><span class="n">49</span> %</div>
<div class="t " style="left:1156px;top:169px;">Nein</div>
<div class="t " style="left:1242px;top:169px;"><span class="n">0</span>%</div>
<svg style="left:201px;top:188px" width="17" height="10"><defs><linearGradient id="hg" x1="0" y1="0" x2="0" y2="1"><stop offset="0" stop-color="#fbfbfd"/><stop offset="0.35" stop-color="#e4e4ec"/><stop offset="1" stop-color="#c4c4cc"/></linearGradient></defs><path d="M3.5 0.5 L12.5 0.5 L15 2.8 L1 2.8 Z" fill="#dcdcdc" stroke="#b0b0b0" stroke-width="0.9"/><rect x="0.5" y="2.5" width="15" height="6" rx="1.2" fill="url(#hg)" stroke="#737378"/><rect x="0.5" y="8" width="15" height="1" fill="#6a6a70"/><rect x="11" y="4" width="2.5" height="3.5" fill="#28e028" stroke="#3a5a3a" stroke-width="0.5"/></svg>
<div class="t " style="left:219px;top:186px;">OS (C:)</div>
<div class="t " style="left:300px;top:186px;">Einfach</div>
<div class="t " style="left:351px;top:186px;">Basis</div>
<div class="t " style="left:389px;top:186px;">NTFS</div>
<div class="t " style="left:465px;top:186px;">Fehlerfrei (System, Startpartition, Auslagerungsdatei, Aktiv, Absturzabbild, Primäre Partition)</div>
<div class="t " style="left:961px;top:186px;"><span class="n">97,04</span> GB</div>
<div class="t " style="left:1024px;top:186px;"><span class="n">15,21</span> GB</div>
<div class="t " style="left:1112px;top:186px;"><span class="n">16</span> %</div>
<div class="t " style="left:1156px;top:186px;">Nein</div>
<div class="t " style="left:1242px;top:186px;"><span class="n">0</span>%</div>
<div style="position:absolute;left:199px;top:379px;width:1522px;height:6px;background:#f0f0f0"></div>
<div style="position:absolute;left:199px;top:381px;width:1522px;height:1px;background:#ffffff"></div>
<div style="position:absolute;left:199px;top:382px;width:1522px;height:1px;background:#e3e3e3"></div>
<div style="position:absolute;left:199px;top:387px;width:1522px;height:614px;background:#f0f0f0"></div>
<div style="position:absolute;left:199px;top:1001px;width:1522px;height:21px;background:#f0f0f0;border-top:1px solid #ffffff;border-right:1px solid #a0a0a0;border-bottom:1px solid #a0a0a0"></div>
<div style="position:absolute;left:204px;top:1005px;width:12px;height:13px;background:#000"></div>
<div class="t " style="left:220px;top:1004px;">Nicht zugeordnet</div>
<div style="position:absolute;left:318px;top:1005px;width:11px;height:13px;background:#000080"></div>
<div class="t " style="left:333px;top:1004px;">Primäre Partition</div>
<div style="position:absolute;left:197px;top:387px;width:2px;height:636px;background:#6e6e6e"></div>
<div style="position:absolute;left:197px;top:1021px;width:1525px;height:2px;background:#8a8a8a"></div>
<div style="position:absolute;left:322px;top:393px;width:599px;height:1px;background:#ffffff"></div>
<div style="position:absolute;left:322px;top:489px;width:600px;height:1px;background:#a0a0a0"></div>
<div style="position:absolute;left:199px;top:392px;width:123px;height:1px;background:#ffffff"></div>
<div style="position:absolute;left:199px;top:490px;width:123px;height:1px;background:#a0a0a0"></div>
<div style="position:absolute;left:199px;top:393px;width:120px;height:97px;background:#f0f0f0"></div>
<div style="position:absolute;left:319px;top:393px;width:2px;height:97px;background:#ffffff"></div>
<div style="position:absolute;left:322px;top:394px;width:1px;height:95px;background:#a0a0a0"></div>
<svg style="left:209px;top:397px" width="17" height="17"><circle cx="11.5" cy="5" r="4.6" fill="#e8e8ec" stroke="#a8a8a8"/><path d="M11.5 0.5 A4.5 4.5 0 0 1 16 5 L11.5 5 Z" fill="#d8c8e8"/><circle cx="11.5" cy="5" r="1.2" fill="#fff" stroke="#b0b0b0" stroke-width="0.6"/><rect x="7.5" y="3" width="1.5" height="2" fill="#40c040"/><path d="M3 8.5 L13 8.5 L15.5 10.5 L0.5 10.5 Z" fill="#e0e0e0" stroke="#a0a0a0"/><rect x="0.5" y="10" width="15" height="6.5" rx="2" fill="url(#hg)" stroke="#6c6c6c"/><rect x="2.5" y="12.5" width="8" height="1" fill="#707070"/><rect x="12" y="11.5" width="2" height="3.5" fill="#10d010"/></svg>
<div class="t b" style="left:226px;top:401px;">CD <span class="n">0</span></div>
<div class="t " style="left:208px;top:416px;">DVD (E:)</div>
<div class="t " style="left:208px;top:431px;"><span class="n">422</span> MB</div>
<div class="t " style="left:208px;top:446px;">Audio-CD</div>
<div style="position:absolute;left:921px;top:393px;width:1px;height:97px;background:#a0a0a0"></div>
<div style="position:absolute;left:324px;top:397px;width:593px;height:1px;background:#ffffff"></div>
<div style="position:absolute;left:324px;top:398px;width:593px;height:13px;background:#000080"></div>
<div style="position:absolute;left:917px;top:397px;width:1px;height:89px;background:#a0a0a0"></div>
<div style="position:absolute;left:324px;top:411px;width:593px;height:1px;background:#a0a0a0"></div>
<div style="position:absolute;left:324px;top:485px;width:594px;height:1px;background:#a0a0a0"></div>
<div style="position:absolute;left:327px;top:414px;width:587px;height:68px;background:#fff;border-top:1px solid #a0a0a0;border-left:1px solid #a0a0a0"></div>
<div style="position:absolute;left:328px;top:415px;width:585px;height:66px;overflow:hidden">
<div class="t" style="left:2px;top:3px"><b>Audio CD  (E:)</b></div>
<div class="t" style="left:2px;top:18px"><span class="n">422</span> MB CDFS</div>
<div class="t" style="left:2px;top:33px">Fehlerfrei (Primäre Partition)</div>
</div>
<div style="position:absolute;left:322px;top:492px;width:1399px;height:1px;background:#ffffff"></div>
<div style="position:absolute;left:322px;top:588px;width:1399px;height:1px;background:#a0a0a0"></div>
<div style="position:absolute;left:199px;top:491px;width:123px;height:1px;background:#ffffff"></div>
<div style="position:absolute;left:199px;top:589px;width:123px;height:1px;background:#a0a0a0"></div>
<div style="position:absolute;left:199px;top:492px;width:120px;height:97px;background:#f0f0f0"></div>
<div style="position:absolute;left:319px;top:492px;width:2px;height:97px;background:#ffffff"></div>
<div style="position:absolute;left:322px;top:493px;width:1px;height:95px;background:#a0a0a0"></div>
<svg style="left:209px;top:496px" width="17" height="17"><circle cx="11.5" cy="5" r="4.6" fill="#e8e8ec" stroke="#a8a8a8"/><path d="M11.5 0.5 A4.5 4.5 0 0 1 16 5 L11.5 5 Z" fill="#d8c8e8"/><circle cx="11.5" cy="5" r="1.2" fill="#fff" stroke="#b0b0b0" stroke-width="0.6"/><rect x="7.5" y="3" width="1.5" height="2" fill="#40c040"/><path d="M3 8.5 L13 8.5 L15.5 10.5 L0.5 10.5 Z" fill="#e0e0e0" stroke="#a0a0a0"/><rect x="0.5" y="10" width="15" height="6.5" rx="2" fill="url(#hg)" stroke="#6c6c6c"/><rect x="2.5" y="12.5" width="8" height="1" fill="#707070"/><rect x="12" y="11.5" width="2" height="3.5" fill="#10d010"/></svg>
<div class="t b" style="left:226px;top:500px;">CD <span class="n">1</span></div>
<div class="t " style="left:208px;top:515px;">DVD (F:)</div>
<div class="t " style="left:208px;top:545px;">Kein Medium</div>
<div style="position:absolute;left:322px;top:591px;width:1291px;height:1px;background:#ffffff"></div>
<div style="position:absolute;left:322px;top:687px;width:1292px;height:1px;background:#a0a0a0"></div>
<div style="position:absolute;left:199px;top:590px;width:123px;height:1px;background:#ffffff"></div>
<div style="position:absolute;left:199px;top:688px;width:123px;height:1px;background:#a0a0a0"></div>
<div style="position:absolute;left:199px;top:591px;width:120px;height:97px;background:#f0f0f0"></div>
<div style="position:absolute;left:319px;top:591px;width:2px;height:97px;background:#ffffff"></div>
<div style="position:absolute;left:322px;top:592px;width:1px;height:95px;background:#a0a0a0"></div>
<svg style="left:209px;top:599px" width="17" height="10"><defs><linearGradient id="hg" x1="0" y1="0" x2="0" y2="1"><stop offset="0" stop-color="#fbfbfd"/><stop offset="0.35" stop-color="#e4e4ec"/><stop offset="1" stop-color="#c4c4cc"/></linearGradient></defs><path d="M3.5 0.5 L12.5 0.5 L15 2.8 L1 2.8 Z" fill="#dcdcdc" stroke="#b0b0b0" stroke-width="0.9"/><rect x="0.5" y="2.5" width="15" height="6" rx="1.2" fill="url(#hg)" stroke="#737378"/><rect x="0.5" y="8" width="15" height="1" fill="#6a6a70"/><rect x="11" y="4" width="2.5" height="3.5" fill="#28e028" stroke="#3a5a3a" stroke-width="0.5"/></svg>
<div class="t b" style="left:226px;top:599px;">Datenträger <span class="n">0</span></div>
<div class="t " style="left:208px;top:614px;">Basis</div>
<div class="t " style="left:208px;top:629px;"><span class="n">465,76</span> GB</div>
<div class="t " style="left:208px;top:644px;">Online</div>
<div style="position:absolute;left:1613px;top:591px;width:1px;height:97px;background:#a0a0a0"></div>
<div style="position:absolute;left:324px;top:595px;width:292px;height:1px;background:#ffffff"></div>
<div style="position:absolute;left:324px;top:596px;width:292px;height:13px;background:#000080"></div>
<div style="position:absolute;left:616px;top:595px;width:1px;height:89px;background:#a0a0a0"></div>
<div style="position:absolute;left:324px;top:609px;width:292px;height:1px;background:#a0a0a0"></div>
<div style="position:absolute;left:324px;top:683px;width:293px;height:1px;background:#a0a0a0"></div>
<div style="position:absolute;left:327px;top:612px;width:286px;height:68px;background:#fff;border-top:1px solid #a0a0a0;border-left:1px solid #a0a0a0"></div>
<div style="position:absolute;left:328px;top:613px;width:284px;height:66px;overflow:hidden">
<div class="t" style="left:2px;top:18px"><span class="n">25,00</span> GB</div>
<div class="t" style="left:2px;top:33px">Fehlerfrei (Primäre Partition)</div>
</div>
<div style="position:absolute;left:618px;top:595px;width:620px;height:1px;background:#ffffff"></div>
<div style="position:absolute;left:618px;top:596px;width:620px;height:13px;background:#000080"></div>
<div style="position:absolute;left:1238px;top:595px;width:1px;height:89px;background:#a0a0a0"></div>
<div style="position:absolute;left:618px;top:609px;width:620px;height:1px;background:#a0a0a0"></div>
<div style="position:absolute;left:616px;top:683px;width:623px;height:1px;background:#a0a0a0"></div>
<div style="position:absolute;left:621px;top:612px;width:614px;height:68px;background:#fff;border-top:1px solid #a0a0a0;border-left:1px solid #a0a0a0"></div>
<div style="position:absolute;left:622px;top:613px;width:612px;height:66px;overflow:hidden">
<div class="t" style="left:2px;top:3px"><b>OS  (C:)</b></div>
<div class="t" style="left:2px;top:18px"><span class="n">97,04</span> GB NTFS</div>
<div class="t" style="left:2px;top:33px">Fehlerfrei (System, Startpartition, Auslagerungsdatei, Aktiv, Absturzabbild, Primäre Partition)</div>
</div>
<div style="position:absolute;left:1240px;top:595px;width:369px;height:1px;background:#ffffff"></div>
<div style="position:absolute;left:1240px;top:596px;width:369px;height:13px;background:#000080"></div>
<div style="position:absolute;left:1609px;top:595px;width:1px;height:89px;background:#a0a0a0"></div>
<div style="position:absolute;left:1240px;top:609px;width:369px;height:1px;background:#a0a0a0"></div>
<div style="position:absolute;left:1238px;top:683px;width:372px;height:1px;background:#a0a0a0"></div>
<div style="position:absolute;left:1243px;top:612px;width:363px;height:68px;background:#fff;border-top:1px solid #a0a0a0;border-left:1px solid #a0a0a0"></div>
<div style="position:absolute;left:1244px;top:613px;width:361px;height:66px;overflow:hidden">
<div class="t" style="left:2px;top:3px"><b>DATA  (D:)</b></div>
<div class="t" style="left:2px;top:18px"><span class="n">322,74</span> GB NTFS</div>
<div class="t" style="left:2px;top:33px">Fehlerfrei (Primäre Partition)</div>
</div>
<div style="position:absolute;left:322px;top:690px;width:815px;height:1px;background:#ffffff"></div>
<div style="position:absolute;left:322px;top:786px;width:816px;height:1px;background:#a0a0a0"></div>
<div style="position:absolute;left:199px;top:689px;width:123px;height:1px;background:#ffffff"></div>
<div style="position:absolute;left:199px;top:787px;width:123px;height:1px;background:#a0a0a0"></div>
<div style="position:absolute;left:199px;top:690px;width:120px;height:97px;background:#f0f0f0"></div>
<div style="position:absolute;left:319px;top:690px;width:2px;height:97px;background:#ffffff"></div>
<div style="position:absolute;left:322px;top:691px;width:1px;height:95px;background:#a0a0a0"></div>
<svg style="left:209px;top:697px" width="17" height="9"><path d="M4 0.5 L12.5 0.5 L15.5 3.2 L1 3.2 Z" fill="#e2e2e2" stroke="#b0b0b0" stroke-width="0.8"/><rect x="0.2" y="3" width="16" height="5.2" rx="2" fill="#262626"/><path d="M4.5 4.6 L11.5 4.6 L14 7.6 L2.5 7.6 Z" fill="#707070"/></svg>
<div class="t b" style="left:226px;top:698px;">Datenträger <span class="n">1</span></div>
<div class="t " style="left:208px;top:713px;">Wechselmedium</div>
<div class="t " style="left:208px;top:728px;"><span class="n">3,83</span> GB</div>
<div class="t " style="left:208px;top:743px;">Online</div>
<div style="position:absolute;left:1137px;top:690px;width:1px;height:97px;background:#a0a0a0"></div>
<div style="position:absolute;left:324px;top:694px;width:809px;height:1px;background:#ffffff"></div>
<div style="position:absolute;left:324px;top:695px;width:809px;height:13px;background:#000080"></div>
<div style="position:absolute;left:1133px;top:694px;width:1px;height:89px;background:#a0a0a0"></div>
<div style="position:absolute;left:324px;top:708px;width:809px;height:1px;background:#a0a0a0"></div>
<div style="position:absolute;left:324px;top:782px;width:810px;height:1px;background:#a0a0a0"></div>
<div style="position:absolute;left:327px;top:711px;width:803px;height:68px;background:#fff;border-top:1px solid #a0a0a0;border-left:1px solid #a0a0a0"></div>
<div style="position:absolute;left:328px;top:712px;width:801px;height:66px;overflow:hidden">
<div class="t" style="left:2px;top:3px"><b>  (G:)</b></div>
<div class="t" style="left:2px;top:18px"><span class="n">3,83</span> GB FAT<span class="n">32</span></div>
<div class="t" style="left:2px;top:33px">Fehlerfrei (Primäre Partition)</div>
</div>
<div style="position:absolute;left:322px;top:789px;width:1400px;height:1px;background:#ffffff"></div>
<div style="position:absolute;left:322px;top:885px;width:1401px;height:1px;background:#a0a0a0"></div>
<div style="position:absolute;left:199px;top:788px;width:123px;height:1px;background:#ffffff"></div>
<div style="position:absolute;left:199px;top:886px;width:123px;height:1px;background:#a0a0a0"></div>
<div style="position:absolute;left:199px;top:789px;width:120px;height:97px;background:#f0f0f0"></div>
<div style="position:absolute;left:319px;top:789px;width:2px;height:97px;background:#ffffff"></div>
<div style="position:absolute;left:322px;top:790px;width:1px;height:95px;background:#a0a0a0"></div>
<svg style="left:209px;top:797px" width="17" height="10"><defs><linearGradient id="hg" x1="0" y1="0" x2="0" y2="1"><stop offset="0" stop-color="#fbfbfd"/><stop offset="0.35" stop-color="#e4e4ec"/><stop offset="1" stop-color="#c4c4cc"/></linearGradient></defs><path d="M3.5 0.5 L12.5 0.5 L15 2.8 L1 2.8 Z" fill="#dcdcdc" stroke="#b0b0b0" stroke-width="0.9"/><rect x="0.5" y="2.5" width="15" height="6" rx="1.2" fill="url(#hg)" stroke="#737378"/><rect x="0.5" y="8" width="15" height="1" fill="#6a6a70"/><rect x="11" y="4" width="2.5" height="3.5" fill="#28e028" stroke="#3a5a3a" stroke-width="0.5"/></svg>
<div class="t b" style="left:226px;top:797px;">Datenträger <span class="n">2</span></div>
<div class="t " style="left:208px;top:812px;">Basis</div>
<div class="t " style="left:208px;top:827px;"><span class="n">1397,26</span> GB</div>
<div class="t " style="left:208px;top:842px;">Online</div>
<div style="position:absolute;left:1722px;top:789px;width:1px;height:97px;background:#a0a0a0"></div>
<div style="position:absolute;left:324px;top:793px;width:302px;height:1px;background:#ffffff"></div>
<div style="position:absolute;left:324px;top:794px;width:302px;height:13px;background:#000080"></div>
<div style="position:absolute;left:626px;top:793px;width:1px;height:89px;background:#a0a0a0"></div>
<div style="position:absolute;left:324px;top:807px;width:302px;height:1px;background:#a0a0a0"></div>
<div style="position:absolute;left:324px;top:881px;width:303px;height:1px;background:#a0a0a0"></div>
<div style="position:absolute;left:327px;top:810px;width:296px;height:68px;background:#fff;border-top:1px solid #a0a0a0;border-left:1px solid #a0a0a0"></div>
<div style="position:absolute;left:328px;top:811px;width:294px;height:66px;overflow:hidden">
<div class="t" style="left:2px;top:18px"><span class="n">200</span> MB</div>
<div class="t" style="left:2px;top:33px">Fehlerfrei (EFI-Systempartition)</div>
</div>
<div style="position:absolute;left:628px;top:793px;width:810px;height:1px;background:#ffffff"></div>
<div style="position:absolute;left:628px;top:794px;width:810px;height:13px;background:#000080"></div>
<div style="position:absolute;left:1438px;top:793px;width:1px;height:89px;background:#a0a0a0"></div>
<div style="position:absolute;left:628px;top:807px;width:810px;height:1px;background:#a0a0a0"></div>
<div style="position:absolute;left:626px;top:881px;width:813px;height:1px;background:#a0a0a0"></div>
<div style="position:absolute;left:626px;top:807px;width:812px;height:74px;background:#c0c0c0"></div>
<div style="position:absolute;left:626px;top:807px;width:1px;height:74px;background:#999999"></div>
<svg style="left:632px;top:811px" width="803" height="66"><defs><pattern id="hp632811" patternUnits="userSpaceOnUse" x="-632" y="-811" width="8" height="8"><rect x="0" y="1" width="1" height="1" fill="#a0a0a0"/><rect x="1" y="0" width="1" height="1" fill="#a0a0a0"/><rect x="2" y="7" width="1" height="1" fill="#a0a0a0"/><rect x="3" y="6" width="1" height="1" fill="#a0a0a0"/><rect x="4" y="5" width="1" height="1" fill="#a0a0a0"/><rect x="5" y="4" width="1" height="1" fill="#a0a0a0"/><rect x="6" y="3" width="1" height="1" fill="#a0a0a0"/><rect x="7" y="2" width="1" height="1" fill="#a0a0a0"/></pattern></defs><rect width="803" height="66" fill="#fff"/><rect width="803" height="66" fill="url(#hp632811)" shape-rendering="crispEdges"/></svg>
<div style="position:absolute;left:631px;top:810px;width:805px;height:68px;border:1px solid #a0a0a0"></div>
<div style="position:absolute;left:632px;top:811px;width:802px;height:66px;overflow:hidden">
<div style="position:absolute;left:4px;top:1px;width:7px;height:15px;background:#fff"></div>
<div class="t" style="left:2px;top:16px;line-height:15px;padding-top:2px;height:15px;background:#fff"><span class="n">1396,94</span> GB</div>
<div class="t" style="left:2px;top:31px;line-height:15px;padding-top:2px;height:15px;background:#fff">Fehlerfrei (Primäre Partition)</div>
</div>
<div style="position:absolute;left:1441px;top:793px;width:277px;height:1px;background:#ffffff"></div>
<div style="position:absolute;left:1441px;top:794px;width:277px;height:13px;background:#000000"></div>
<div style="position:absolute;left:1718px;top:793px;width:1px;height:89px;background:#a0a0a0"></div>
<div style="position:absolute;left:1441px;top:807px;width:277px;height:1px;background:#a0a0a0"></div>
<div style="position:absolute;left:1439px;top:881px;width:280px;height:1px;background:#a0a0a0"></div>
<div style="position:absolute;left:1444px;top:810px;width:271px;height:68px;background:#fff;border-top:1px solid #a0a0a0;border-left:1px solid #a0a0a0"></div>
<div style="position:absolute;left:1445px;top:811px;width:269px;height:66px;overflow:hidden">
<div class="t" style="left:2px;top:18px"><span class="n">128</span> MB</div>
<div class="t" style="left:2px;top:33px">Nicht zugeordnet</div>
</div>
<div style="position:absolute;left:1721px;top:78px;width:6px;height:945px;background:#f0f0f0"></div>
<div style="position:absolute;left:1722px;top:78px;width:1px;height:945px;background:#ffffff"></div>
<div style="position:absolute;left:1727px;top:78px;width:189px;height:945px;background:#fff;border-left:1px solid #6e6e6e;border-top:2px solid #6e6e6e"></div>
<div style="position:absolute;left:1728px;top:80px;width:186px;height:19px;background:linear-gradient(#ffffff 0,#f2f2f2 2px,#efefef 19px)"></div>
<div style="position:absolute;left:1728px;top:99px;width:186px;height:1px;background:#7a7a7a"></div>
<div class="t b" style="left:1733px;top:84px;">Aktionen</div>
<div style="position:absolute;left:1728px;top:101px;width:186px;height:25px;background:linear-gradient(#c3d5ea 0,#aec5e0 12px,#9cb5d4 25px)"></div>
<div class="t " style="left:1735px;top:108px;">Datenträgerverwaltung</div>
<svg style="left:1898px;top:110px" width="10" height="6"><path d="M0 6 L5 0.5 L10 6 Z" fill="#000"/></svg>
<div class="t " style="left:1760px;top:131px;">Weitere Aktionen</div>
<svg style="left:1901px;top:133px" width="6" height="10"><path d="M0.5 0 L5.5 5 L0.5 10 Z" fill="#000"/></svg>
<div style="position:absolute;left:1914px;top:80px;width:1px;height:943px;background:#e5e5e5"></div>
<div style="position:absolute;left:1915px;top:78px;width:1px;height:945px;background:#ffffff"></div>
<div style="position:absolute;left:4px;top:1023px;width:1912px;height:1px;background:#8c8c8c"></div>
<div style="position:absolute;left:4px;top:1024px;width:1912px;height:22px;background:#f0eded;border-top:1px solid #fff;border-bottom:1px solid #fff;border-left:1px solid #fff"></div>
<div style="position:absolute;left:1695px;top:1025px;width:1px;height:20px;background:#d8d8d8"></div>
<div style="position:absolute;left:1828px;top:1025px;width:1px;height:20px;background:#d8d8d8"></div>
<div style="position:absolute;left:1913px;top:1025px;width:1px;height:20px;background:#d8d8d8"></div>
<div style="position:absolute;left:15px;top:1046px;width:25px;height:20px;border-radius:50%;border:1px solid #2a6090;background:#a8c8e0"></div>
<div style="position:absolute;left:902px;top:579px;width:312px;height:281px;background:rgba(0,0,0,0.10);filter:blur(1.5px);border-radius:3px"></div>
<div style="position:absolute;left:901px;top:578px;width:312px;height:281px;background:rgba(0,0,0,0.22);filter:blur(1px)"></div>
<div style="position:absolute;left:900px;top:577px;width:311px;height:280px;background:#f0f0f0;border:1px solid #979797;box-shadow:inset 1px 1px 0 #fff,inset -1px -1px 0 #fff"></div>
<div style="position:absolute;left:929px;top:579px;width:1px;height:275px;background:#e2e3e3"></div>
<div style="position:absolute;left:930px;top:579px;width:1px;height:275px;background:#ffffff"></div>
<div style="position:absolute;left:931px;top:628px;width:277px;height:1px;background:#e0e0e0"></div>
<div style="position:absolute;left:931px;top:629px;width:277px;height:1px;background:#ffffff"></div>
<div style="position:absolute;left:931px;top:702px;width:277px;height:1px;background:#e0e0e0"></div>
<div style="position:absolute;left:931px;top:703px;width:277px;height:1px;background:#ffffff"></div>
<div style="position:absolute;left:931px;top:798px;width:277px;height:1px;background:#e0e0e0"></div>
<div style="position:absolute;left:931px;top:799px;width:277px;height:1px;background:#ffffff"></div>
<div style="position:absolute;left:931px;top:828px;width:277px;height:1px;background:#e0e0e0"></div>
<div style="position:absolute;left:931px;top:829px;width:277px;height:1px;background:#ffffff"></div>
<div class="t g" style="left:935px;top:584px;">Öffnen</div>
<div class="t g" style="left:935px;top:606px;">Durchsuchen</div>
<div class="t g" style="left:935px;top:636px;">Partition als aktiv markieren</div>
<div class="t g" style="left:935px;top:658px;">Laufwerkbuchstaben und -pfade ändern...</div>
<div class="t g" style="left:935px;top:680px;">Formatieren...</div>
<div class="t g" style="left:935px;top:710px;">Volume erweitern...</div>
<div class="t g" style="left:935px;top:732px;">Volume verkleinern...</div>
<div class="t g" style="left:935px;top:754px;">Spiegelung hinzufügen...</div>
<div class="t " style="left:935px;top:776px;">Volume löschen...</div>
<div class="t g" style="left:935px;top:806px;">Eigenschaften</div>
<div class="t " style="left:935px;top:836px;">Hilfe</div>
</body></html>
